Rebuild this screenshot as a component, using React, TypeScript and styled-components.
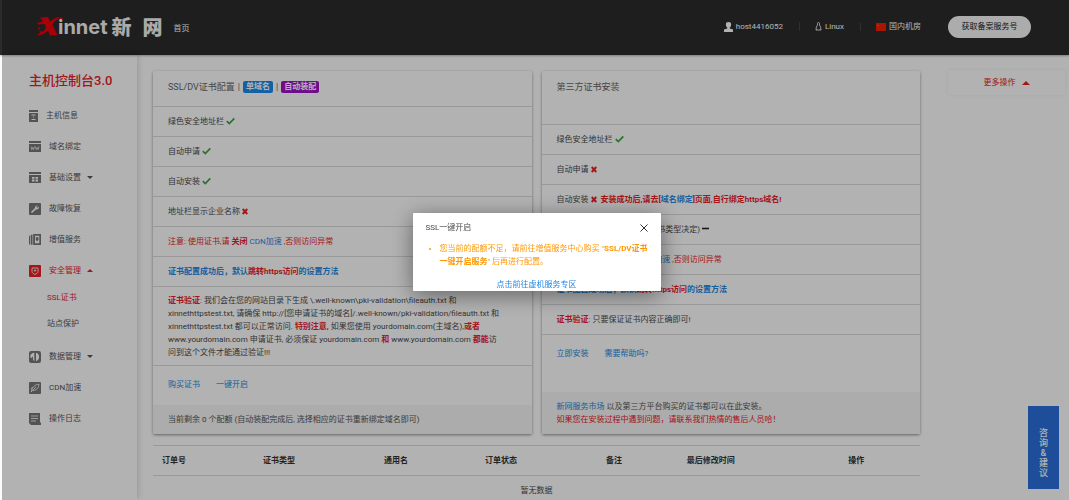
import React from "react";
import styled, { createGlobalStyle, css } from "styled-components";

const GlobalStyle = createGlobalStyle`
  * { box-sizing: border-box; }
  body {
    margin: 0;
    background: #fff;
    color: #4a4a4a;
    font: 8px/13px Roboto, "Noto Sans CJK SC", sans-serif;
  }
  button { font: inherit; color: inherit; border: 0; background: none; padding: 0; cursor: pointer; }
  ul { list-style: none; margin: 0; padding: 0; }
  h1, h2, p { margin: 0; font-weight: 400; }
`;

const RED = "#ea2127";
const BLUE = "#2388e2";

/* ---------- header ---------- */
const Header = styled.header`
  display: flex;
  align-items: center;
  height: 55px;
  padding: 0 38px 2px 37px;
  background: #2b2b2b;
  color: #fff;
  box-shadow: 0 1px 2px rgba(0, 0, 0, 0.3);
`;

const Logo = styled.a`
  display: flex;
  align-items: center;
  color: #f4f4f4;
  text-decoration: none;
`;

const LogoMark = styled.svg`
  width: 27px;
  height: 21px;
  margin-right: -6px;
`;

const LogoLatin = styled.span`
  font: 700 20px/24px Inter, sans-serif;
`;

const LogoHan = styled.span`
  display: flex;
  gap: 11px;
  margin-left: 4px;
  font: 900 20px/24px "Noto Sans CJK SC", sans-serif;
`;

const HomeLink = styled.a`
  margin: 3px auto 0 11px;
  color: #fff;
  text-decoration: none;
`;

const Status = styled.ul`
  display: flex;
  align-items: center;
`;

const StatusItem = styled.li`
  display: flex;
  align-items: center;
  gap: 3px;
  & + & {
    margin-left: 16px;
    padding-left: 15px;
    border-left: 1px solid #444;
    line-height: 8px;
  }
`;

const PillButton = styled.button`
  width: 83px;
  height: 22px;
  margin-left: 27px;
  border-radius: 11px;
  background: #f6f6f6;
  color: #222;
`;

/* ---------- shell ---------- */
const Shell = styled.div`
  display: flex;
  align-items: stretch;
  padding: 0 4px 0 2px;
`;

const Sidebar = styled.nav`
  flex: 0 0 135px;
  padding: 10px 0 60px 27px;
  box-shadow: 2px 0 5px rgba(0, 0, 0, 0.12);
`;

const SideTitle = styled.h1`
  margin-bottom: 3px;
  color: ${RED};
  font-size: 13px;
  line-height: 32px;
  font-weight: 500;
`;

const itemColor = css<{ $active?: boolean }>`
  color: ${(p) => (p.$active ? RED : "#555")};
`;

const SideLink = styled.a<{ $active?: boolean }>`
  display: flex;
  align-items: center;
  height: 31px;
  text-decoration: none;
  ${itemColor}
  svg {
    margin-right: 8px;
    color: ${(p) => (p.$active ? RED : "#777")};
  }
`;

const SubList = styled.ul`
  display: grid;
  gap: 2px;
  padding: 0 0 5px 18px;
`;

const SubLink = styled.a<{ $active?: boolean }>`
  display: block;
  line-height: 24px;
  text-decoration: none;
  ${itemColor}
`;

const Caret = styled.i<{ $up?: boolean; $wide?: boolean }>`
  margin-left: 6px;
  border: ${(p) => (p.$wide ? 4 : 3)}px solid transparent;
  ${(p) => (p.$up ? "border-top" : "border-bottom")}-width: 0;
  ${(p) => (p.$up ? "border-bottom" : "border-top")}-color: currentColor;
`;

const Main = styled.main`
  flex: 1;
  min-width: 0;
  margin: 16px 28px 0 16px;
`;

const Aside = styled.aside`
  flex: 0 0 117px;
  padding-top: 15px;
`;

const MoreButton = styled.button`
  display: flex;
  align-items: center;
  justify-content: center;
  width: 100%;
  height: 25px;
  color: ${RED};
  box-shadow: 0 0 3px rgba(0, 0, 0, 0.08);
`;

/* ---------- cards ---------- */
const Cards = styled.div`
  display: grid;
  grid-template-columns: 1fr 1fr;
  gap: 10px;
`;

const Card = styled.section`
  display: flex;
  flex-direction: column;
  border-radius: 2px;
  box-shadow: 0 1px 3px rgba(0, 0, 0, 0.45);
`;

const CardTitle = styled.h2<{ $tall?: boolean }>`
  display: flex;
  align-items: center;
  gap: 3px;
  padding: 9px 15px ${(p) => (p.$tall ? 30 : 12)}px;
  border-bottom: 1px solid #dcdcdc;
  color: #666;
  font-size: 9px;
  line-height: 14px;
`;

const Badge = styled.span<{ $color: string }>`
  padding: 0 3px;
  border-radius: 2px;
  background: ${(p) => p.$color};
  color: #fff;
  font-size: 8px;
  font-weight: 700;
  line-height: 12px;
`;

const Row = styled.div`
  padding: 8px 15px;
  border-bottom: 1px solid #dcdcdc;
  svg { margin-left: 2px; vertical-align: -1px; }
`;

const Paragraph = styled.p`
  padding: 7px 15px 6px;
  border-bottom: 1px solid #dcdcdc;
`;

const Actions = styled.div`
  display: flex;
  flex: 1;
  gap: 16px;
  padding: 12px 15px 14px;
`;

const CardFooter = styled.footer`
  padding: 8px 15px;
  background: #f6f6f6;
  color: #555;
`;

const Link = styled.a`
  color: ${BLUE};
  text-decoration: none;
`;

const Red = styled.span`
  color: ${RED};
`;

const RedBold = styled.b`
  color: ${RED};
`;

/* ---------- orders ---------- */
const Table = styled.table`
  width: 100%;
  margin-top: 11px;
  border-collapse: collapse;
  table-layout: fixed;
`;

const Th = styled.th<{ $share: number }>`
  width: ${(p) => (p.$share / 38) * 100}%;
  padding: 8px 9px;
  border: solid #dcdcdc;
  border-width: 1px 0;
  color: #333;
  text-align: left;
`;

const Empty = styled.td`
  padding: 8px 0 2px;
  text-align: center;
`;

/* ---------- floating parts ---------- */
const Feedback = styled.button`
  position: fixed;
  right: 10px;
  bottom: 11px;
  width: 31px;
  height: 83px;
  padding: 10px 11px 0;
  background: #2c6fdb;
  color: #fff;
  font-size: 9px;
  font-weight: 500;
  line-height: 10px;
`;

const Overlay = styled.div`
  position: fixed;
  inset: 0 0 0 2px;
  display: flex;
  align-items: center;
  justify-content: center;
  padding: 4px 0 0 2px;
  background: rgba(0, 0, 0, 0.3);
`;

const Dialog = styled.div`
  width: 248px;
  padding: 8px 2px 0 13px;
  border-radius: 1px;
  background: #fff;
  box-shadow: 0 4px 22px rgba(0, 0, 0, 0.45);
`;

const DialogHead = styled.div`
  display: flex;
  align-items: center;
  justify-content: space-between;
  padding-right: 8px;
  line-height: 14px;
`;

const CloseButton = styled.button`
  display: flex;
`;

const Notice = styled.ul`
  margin: 7px 0 10px;
  padding-left: 14px;
  color: #ff9800;
  list-style: disc;
`;

const DialogLink = styled(Link)`
  display: block;
  padding-right: 11px;
  text-align: center;
`;

/* ---------- drawings ---------- */
const Check = () => (
  <svg width="9" height="8" viewBox="0 0 9 8" fill="none" stroke="#3aa53f" strokeWidth="1.7">
    <path d="M0.8 4.2 3.3 6.6 8.3 1.4" />
  </svg>
);
const Cross = () => (
  <svg width="6" height="7" viewBox="0 0 6 7" fill="none" stroke={RED} strokeWidth="1.9">
    <path d="M0.7 1 5.3 6M5.3 1 0.7 6" />
  </svg>
);
const Dash = () => (
  <svg width="7" height="8" viewBox="0 0 7 8" fill="none" stroke="#222" strokeWidth="1.6">
    <path d="M0 3.5H7" />
  </svg>
);

const icons: Record<string, React.ReactNode> = {
  host: (
    <svg width="9" height="12" viewBox="0 0 9 12" fill="currentColor">
      <path d="M0 0h9v2H0z" />
      <path fillRule="evenodd" d="M0 3h9v9H0zM2.5 4.5v1h4v-1zM4 6.5v1h1v-1zM2.5 9v1h4V9z" />
    </svg>
  ),
  domain: (
    <svg width="12" height="11" viewBox="0 0 12 11" fill="currentColor">
      <path d="M0 0h12v2H0z" />
      <path d="M0 3h12v8H0z" />
      <path d="M2 5.5l.8 3 .9-2 .9 2 .9-3M6.5 5.5l.8 3 .9-2 .9 2 .9-3" fill="none" stroke="#fff" strokeWidth=".7" />
    </svg>
  ),
  settings: (
    <svg width="12" height="11" viewBox="0 0 12 11" fill="currentColor">
      <path d="M0 0h12v2H0z" />
      <path d="M0 3h12v8H0z" />
      <path d="M3 5h2.5v1.8H3zM6.5 5H9v1.8H6.5zM3 7.6h2.5v1.8H3zM6.5 7.6H9v1.8H6.5z" fill="#fff" />
    </svg>
  ),
  repair: (
    <svg width="12" height="12" viewBox="0 0 12 12">
      <rect width="12" height="12" rx="1" fill="currentColor" />
      <path d="M2.5 9.5 6.6 5.6" stroke="#fff" strokeWidth="1.6" />
      <path d="M8.8 2.6 7.4 4.1l.7.8 1.6-1.3c.5 1.5-.6 3-2.2 2.9C5.3 6.3 5.4 2.5 8.8 2.6z" fill="#fff" />
    </svg>
  ),
  value: (
    <svg width="12" height="11" viewBox="0 0 12 11" fill="currentColor">
      <path d="M0 2.2 1.3 1v9.5H0zM2 .8h1.5v10H2z" />
      <path fillRule="evenodd" d="M4.2 0H12v11H4.2zM6 1.8v7.4h4.3V1.8z" />
      <path d="M6.8 3.3h2.7v2.5L8.15 7.5 6.8 5.8z" />
    </svg>
  ),
  shield: (
    <svg width="12" height="12" viewBox="0 0 12 12" fill="none">
      <rect width="12" height="12" rx="1" fill="currentColor" />
      <path d="M3 3h6v3.5c0 1.3-1.4 2.3-3 3-1.6-.7-3-1.7-3-3z" stroke="#fff" strokeWidth=".8" />
      <path d="M6 4.2v2.6M4.8 5.5h2.4" stroke="#fff" strokeWidth=".7" />
    </svg>
  ),
  data: (
    <svg width="12" height="12" viewBox="0 0 12 12" fill="none">
      <rect x=".5" y=".5" width="11" height="11" rx="1" stroke="currentColor" />
      <path d="M1 1h10v10H1z" fill="currentColor" />
      <path d="M5.3 1.8C.8 2.4.6 6 2.2 7.2L4 5.2v3.6l1.300 1.400zM7 1.800c4.200 1 4.200 7.400 0 8.400z" fill="#fff" />
    </svg>
  ),
  cdn: (
    <svg width="12" height="12" viewBox="0 0 12 12" fill="none">
      <rect width="12" height="12" rx="1" fill="currentColor" />
      <path d="M2.3 9.8C3 5 6 2.5 10 2.2 9.7 6 7.5 8.5 4 8.3M2 10l5-5M1.8 7l2-2" stroke="#fff" strokeWidth=".8" />
    </svg>
  ),
  log: (
    <svg width="12" height="12" viewBox="0 0 12 12" fill="none">
      <path d="M0 0h11v9.5H12V12H2L0 10z" fill="currentColor" />
      <path d="M2 3h7M2 5.5h7M2 8h5" stroke="#fff" strokeWidth=".8" />
    </svg>
  ),
};

type Item = { icon: string; label: string; caret?: "up" | "down"; active?: boolean; children?: string[] };

const menu: Item[] = [
  { icon: "host", label: "主机信息" },
  { icon: "domain", label: "域名绑定" },
  { icon: "settings", label: "基础设置", caret: "down" },
  { icon: "repair", label: "故障恢复" },
  { icon: "value", label: "增值服务" },
  { icon: "shield", label: "安全管理", caret: "up", active: true, children: ["SSL证书", "站点保护"] },
  { icon: "data", label: "数据管理", caret: "down" },
  { icon: "cdn", label: "CDN加速" },
  { icon: "log", label: "操作日志" },
];

const columns: [string, number][] = [
  ["订单号", 5],
  ["证书类型", 6],
  ["通用名", 5],
  ["订单状态", 6],
  ["备注", 4],
  ["最后修改时间", 8],
  ["操作", 4],
];

const CdnWarning = () => (
  <Row>
    <Red>
      注意: 使用证书,请 <b>关闭</b> <Link href="#cdn">CDN加速</Link> ,否则访问异常
    </Red>
  </Row>
);

const RedirectHelp = () => (
  <Row>
    <Link href="#redirect">
      <b>
        证书配置成功后，默认<Red>跳转https访问</Red>的设置方法
      </b>
    </Link>
  </Row>
);

export default function App() {
  return (
    <>
      <GlobalStyle />
      <Header>
        <Logo href="#">
          <LogoMark viewBox="0 0 27 21" fill="#f0000c" aria-hidden="true">
            <path d="M3 1.5 11 1l2.5 4.5C16 3 19 1.300 22.500 1l-1 2C18.500 4.500 16.500 6.500 15.500 8.500L20.500 19l-7.500.5-2-5C8.500 17 5.500 18.500 2 19.500L.5 18l3-1-1.500-2 4.500.5C7.500 14 8.500 12.500 9 11L7.500 8 1 8.500 0 7l6-1.500z" />
            <circle cx="24" cy="2.5" r="1.5" />
            <circle cx="2" cy="12.5" r="1" />
          </LogoMark>
          <LogoLatin>innet</LogoLatin>
          <LogoHan>
            <span>新</span>
            <span>网</span>
          </LogoHan>
        </Logo>
        <HomeLink href="#home">首页</HomeLink>
        <Status>
          <StatusItem>
            <svg width="9" height="10" viewBox="0 0 9 10" fill="#fff">
              <path d="M4.5 0a2.6 2.6 0 0 1 2.6 2.8c0 1.3-.6 2.3-1.3 2.8v.8L9 7.5V10H0V7.5l3.2-1.1v-.8C2.5 5.1 1.9 4.1 1.9 2.8A2.6 2.6 0 0 1 4.5 0z" />
            </svg>
            host4416052
          </StatusItem>
          <StatusItem>
            <svg width="7" height="9" viewBox="0 0 7 9" fill="none" stroke="#fff" strokeWidth=".8">
              <path d="M2.5 3V1.5a1 1 0 0 1 2 0V3L6 6 5 8H2L1 6zM.5 7.5l1.5.8M6.5 7.5 5 8.3" />
            </svg>
            Linux
          </StatusItem>
          <StatusItem>
            <svg width="10" height="8" viewBox="0 0 10 8">
              <path d="M0 0h10v8H0z" fill="#f22000" />
              <path d="M2 1l.4 1h1l-.8.6.3 1L2 3l-.9.6.3-1L.6 2h1z" fill="#f50" />
            </svg>
            国内机房
          </StatusItem>
        </Status>
        <PillButton>获取备案服务号</PillButton>
      </Header>

      <Shell>
        <Sidebar>
          <SideTitle>主机控制台3.0</SideTitle>
          <ul>
            {menu.map((m) => (
              <li key={m.label}>
                <SideLink href="#" $active={m.active}>
                  {icons[m.icon]}
                  {m.label}
                  {m.caret && <Caret $up={m.caret === "up"} />}
                </SideLink>
                {m.children && (
                  <SubList>
                    {m.children.map((c, i) => (
                      <li key={c}>
                        <SubLink href="#" $active={i === 0}>
                          {c}
                        </SubLink>
                      </li>
                    ))}
                  </SubList>
                )}
              </li>
            ))}
          </ul>
        </Sidebar>

        <Main>
          <Cards>
            <Card>
              <CardTitle>
                SSL/DV证书配置 <span>|</span> <Badge $color="#1a8cf0">单域名</Badge> <span>|</span>{" "}
                <Badge $color="#a012c8">自动装配</Badge>
              </CardTitle>
              <Row>绿色安全地址栏<Check /></Row>
              <Row>自动申请<Check /></Row>
              <Row>自动安装<Check /></Row>
              <Row>地址栏显示企业名称<Cross /></Row>
              <CdnWarning />
              <RedirectHelp />
              <Paragraph>
                <RedBold>证书验证</RedBold>
                <Red>:</Red> 我们会在您的网站目录下生成 \.well-known\pki-validation\fileauth.txt 和
                <br />
                xinnethttpstest.txt, 请确保 http://[您申请证书的域名]/.well-known/pki-validation/fileauth.txt 和
                <br />
                xinnethttpstest.txt 都可以正常访问. <RedBold>特别注意,</RedBold> 如果您使用 yourdomain.com(主域名),
                <RedBold>或者</RedBold>
                <br />
                www.yourdomain.com 申请证书, 必须保证 yourdomain.com <RedBold>和</RedBold> www.yourdomain.com{" "}
                <RedBold>都能</RedBold>访
                <br />
                问到这个文件才能通过验证!!!
              </Paragraph>
              <Actions>
                <Link href="#buy">购买证书</Link>
                <Link href="#open">一键开启</Link>
              </Actions>
              <CardFooter>当前剩余 0 个配额 (自动装配完成后, 选择相应的证书重新绑定域名即可)</CardFooter>
            </Card>

            <Card>
              <CardTitle $tall>第三方证书安装</CardTitle>
              <Row>绿色安全地址栏<Check /></Row>
              <Row>自动申请<Cross /></Row>
              <Row>
                自动安装<Cross />{" "}
                <RedBold>
                  &nbsp;安装成功后,请去[<Link href="#bind">域名绑定</Link>]页面,自行绑定https域名!
                </RedBold>
              </Row>
              <Row>地址栏显示企业名称 (根据证书类型决定)<Dash /></Row>
              <CdnWarning />
              <RedirectHelp />
              <Row>
                <RedBold>证书验证</RedBold>
                <Red>:</Red> 只要保证证书内容正确即可!
              </Row>
              <Actions>
                <Link href="#install">立即安装</Link>
                <Link href="#help">需要帮助吗?</Link>
              </Actions>
              <CardFooter>
                <Link href="#market">新网服务市场</Link> 以及第三方平台购买的证书都可以在此安装。
                <br />
                <Red>如果您在安装过程中遇到问题，请联系我们热情的售后人员哈！</Red>
              </CardFooter>
            </Card>
          </Cards>

          <Table>
            <thead>
              <tr>
                {columns.map(([name, share]) => (
                  <Th key={name} $share={share}>
                    {name}
                  </Th>
                ))}
              </tr>
            </thead>
            <tbody>
              <tr>
                <Empty colSpan={columns.length}>暂无数据</Empty>
              </tr>
            </tbody>
          </Table>
        </Main>

        <Aside>
          <MoreButton>
            更多操作
            <Caret $up $wide />
          </MoreButton>
        </Aside>
      </Shell>

      <Feedback>咨询&amp;建议</Feedback>

      <Overlay>
        <Dialog role="dialog" aria-label="SSL一键开启">
          <DialogHead>
            SSL一键开启
            <CloseButton aria-label="关闭">
              <svg width="14" height="14" viewBox="0 0 14 14" fill="none" stroke="#333">
                <path d="M3.5 3.5l7 7M10.5 3.5l-7 7" />
              </svg>
            </CloseButton>
          </DialogHead>
          <Notice>
            <li>
              您当前的配额不足，请前往增值服务中心购买 "<b>SSL/DV证书</b>
              <br />
              <b>一键开启服务</b>" 后再进行配置。
            </li>
          </Notice>
          <DialogLink href="#services">点击前往虚机服务专区</DialogLink>
        </Dialog>
      </Overlay>
    </>
  );
}
